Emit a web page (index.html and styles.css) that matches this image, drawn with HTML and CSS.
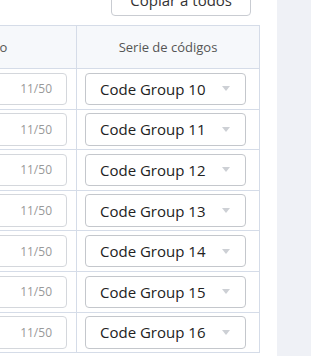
FILE: index.html
```html
<!DOCTYPE html>
<html lang="es">
<head>
    <meta charset="UTF-8">
    <meta name="viewport" content="width=device-width, initial-scale=1.0">
    <title>Series de códigos</title>
    <link rel="stylesheet" href="styles.css">
</head>
<body>
    <div class="page">
        <div class="main">
            <div class="toolbar">
                <button class="copy-btn">Copiar a todos</button>
            </div>
            <div class="table">
                <div class="row head">
                    <div class="cell">Texto</div>
                    <div class="cell">Serie de códigos</div>
                </div>
                <div class="row">
                    <div class="cell"><div class="text-input"><span class="count">11/50</span></div></div>
                    <div class="cell"><div class="select">Code Group 10<span class="caret"></span></div></div>
                </div>
                <div class="row">
                    <div class="cell"><div class="text-input"><span class="count">11/50</span></div></div>
                    <div class="cell"><div class="select">Code Group 11<span class="caret"></span></div></div>
                </div>
                <div class="row">
                    <div class="cell"><div class="text-input"><span class="count">11/50</span></div></div>
                    <div class="cell"><div class="select">Code Group 12<span class="caret"></span></div></div>
                </div>
                <div class="row">
                    <div class="cell"><div class="text-input"><span class="count">11/50</span></div></div>
                    <div class="cell"><div class="select">Code Group 13<span class="caret"></span></div></div>
                </div>
                <div class="row">
                    <div class="cell"><div class="text-input"><span class="count">11/50</span></div></div>
                    <div class="cell"><div class="select">Code Group 14<span class="caret"></span></div></div>
                </div>
                <div class="row">
                    <div class="cell"><div class="text-input"><span class="count">11/50</span></div></div>
                    <div class="cell"><div class="select">Code Group 15<span class="caret"></span></div></div>
                </div>
                <div class="row">
                    <div class="cell"><div class="text-input"><span class="count">11/50</span></div></div>
                    <div class="cell"><div class="select">Code Group 16<span class="caret"></span></div></div>
                </div>
            </div>
        </div>
        <aside class="side"></aside>
    </div>
</body>
</html>
```

FILE: styles.css
```css
body {
    margin: 0;
    font-family: 'Open Sans', 'Liberation Sans', sans-serif;
    color: #333;
    background: #fff;
    overflow: hidden;
    height: 356px;
}

.page {
    display: flex;
    margin-top: -16px;
    height: 400px;
}

.main {
    width: 259px;
    margin-right: 18px;
    flex-shrink: 0;
}

.side {
    flex: 1;
    background: #eff1f6;
}

.toolbar {
    display: flex;
    justify-content: flex-end;
    padding-right: 8px;
    margin-bottom: 9px;
}

.copy-btn {
    height: 32px;
    padding: 0 18px;
    font-family: inherit;
    font-size: 15px;
    color: #333;
    background: #fff;
    border: 1px solid #c9ccd2;
    border-radius: 4px;
}

.table {
    margin-left: -95px;
    width: 354px;
    border-top: 1px solid #d5dce8;
    border-right: 1px solid #d5dce8;
}

.row {
    display: grid;
    grid-template-columns: 172px 1fr;
    height: 40.6px;
    box-sizing: border-box;
    border-bottom: 1px solid #d5dce8;
}

.row.head {
    height: 43px;
    background: #f6f8fb;
    font-size: 13px;
    color: #555;
}

.cell {
    display: flex;
    align-items: center;
    box-sizing: border-box;
}

.cell:first-child {
    border-right: 1px solid #d5dce8;
    padding: 0 9px 0 10px;
}

.cell:last-child {
    padding: 0 13px 0 8px;
}

.head .cell {
    justify-content: center;
    padding: 0;
}

.text-input {
    flex: 1;
    height: 32.5px;
    box-sizing: border-box;
    border: 1px solid #d4d7dc;
    border-radius: 4px;
    display: flex;
    align-items: center;
    justify-content: flex-end;
    padding-right: 14px;
}

.count {
    font-size: 12px;
    color: #999;
}

.select {
    flex: 1;
    height: 32.5px;
    box-sizing: border-box;
    border: 1px solid #c4c7cc;
    border-radius: 4px;
    display: flex;
    align-items: center;
    padding: 0 15px 0 14px;
    font-size: 15px;
    color: #222;
}

.caret {
    margin-left: auto;
    width: 0;
    height: 0;
    border-left: 4px solid transparent;
    border-right: 4px solid transparent;
    border-top: 5px solid #cdd0d5;
}
```
